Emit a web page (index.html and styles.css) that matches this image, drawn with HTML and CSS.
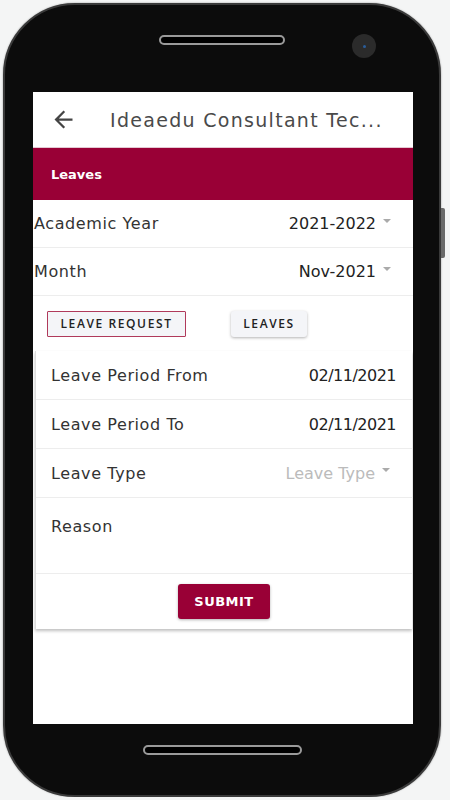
FILE: index.html
```html
<!DOCTYPE html>
<html lang="en">
<head>
    <meta charset="UTF-8">
    <meta name="viewport" content="width=device-width, initial-scale=1.0">
    <title>Leaves</title>
    <link rel="stylesheet" href="styles.css">
</head>
<body>
    <div class="phone">
        <div class="side-key"></div>
        <div class="bezel-top">
            <div class="speaker"></div>
            <div class="camera"><span></span></div>
        </div>
        <div class="screen">
            <div class="appbar">
                <svg class="back" width="27" height="27" viewBox="0 0 24 24">
                    <path d="M20 11H7.83l5.59-5.59L12 4l-8 8 8 8 1.41-1.41L7.83 13H20v-2z" fill="#444"/>
                </svg>
                <div class="title">Ideaedu Consultant Tec...</div>
            </div>
            <div class="section-bar">Leaves</div>

            <div class="row">
                <span class="label">Academic Year</span>
                <span class="select">2021-2022 <i class="caret"></i></span>
            </div>
            <div class="row">
                <span class="label">Month</span>
                <span class="select">Nov-2021 <i class="caret"></i></span>
            </div>
            <div class="tabs">
                <button class="tab active">LEAVE REQUEST</button>
                <button class="tab raised">LEAVES</button>
            </div>

            <div class="card">
                <div class="field">
                    <span class="label">Leave Period From</span>
                    <span class="value">02/11/2021</span>
                </div>
                <div class="field">
                    <span class="label">Leave Period To</span>
                    <span class="value">02/11/2021</span>
                </div>
                <div class="field">
                    <span class="label">Leave Type</span>
                    <span class="select muted">Leave Type <i class="caret"></i></span>
                </div>
                <div class="field reason">
                    <span class="label">Reason</span>
                </div>
                <div class="actions">
                    <button class="submit">SUBMIT</button>
                </div>
            </div>
        </div>
        <div class="bezel-bottom">
            <div class="speaker wide"></div>
        </div>
    </div>
</body>
</html>
```

FILE: styles.css
```css
body {
    margin: 0;
    background-color: #f4f5f5;
    font-family: "DejaVu Sans", "Open Sans", sans-serif;
}
.phone {
    position: relative;
    width: 434px;
    height: 790px;
    margin: 3px 0 0 3px;
    background-color: #0c0c0c;
    border: 2px solid #3a3a3a;
    border-radius: 72px;
    box-shadow: 0 0 2px rgba(0, 0, 0, 0.4);
    display: flex;
    flex-direction: column;
    align-items: center;
}
.side-key {
    position: absolute;
    right: -6px;
    top: 203px;
    width: 4px;
    height: 50px;
    background-color: #6a6a6a;
    border-radius: 0 2px 2px 0;
}
.bezel-top {
    position: relative;
    width: 100%;
    height: 87px;
    display: flex;
    justify-content: center;
    padding-top: 30px;
    box-sizing: border-box;
}
.speaker {
    width: 122px;
    height: 6px;
    border: 2px solid #9a9a9a;
    border-radius: 6px;
    background-color: #000;
}
.speaker.wide {
    width: 155px;
}
.camera {
    position: absolute;
    left: 347px;
    top: 29px;
    width: 24px;
    height: 24px;
    border-radius: 50%;
    background-color: #2b2b2b;
    display: flex;
    align-items: center;
    justify-content: center;
}
.camera span {
    width: 3px;
    height: 3px;
    border-radius: 50%;
    background-color: #2a5d9a;
}
.screen {
    width: 380px;
    height: 632px;
    margin-left: 2px;
    background-color: #fff;
    overflow: hidden;
}
.bezel-bottom {
    width: 100%;
    padding-top: 21px;
    display: flex;
    justify-content: center;
}
.appbar {
    height: 55px;
    display: flex;
    align-items: center;
    border-bottom: 1px solid #e3c9d2;
}
.back {
    margin-left: 17px;
    margin-right: 33px;
}
.title {
    font-size: 19px;
    color: #4a4a4a;
    letter-spacing: 1.3px;
    white-space: nowrap;
}
.section-bar {
    height: 52px;
    background-color: #990036;
    color: #fff;
    font-size: 13px;
    font-weight: 700;
    display: flex;
    align-items: center;
    padding-left: 18px;
}
.row {
    height: 47px;
    display: flex;
    align-items: center;
    justify-content: space-between;
    padding: 0 22px 0 1px;
    border-bottom: 1px solid #ededed;
    font-size: 16px;
    color: #333;
}
.label {
    color: #333;
    letter-spacing: 0.6px;
}
.select {
    display: flex;
    align-items: center;
    color: #222;
}
.select.muted {
    color: #bbb;
}
.caret {
    width: 0;
    height: 0;
    margin-left: 7px;
    margin-bottom: 6px;
    border-left: 4px solid transparent;
    border-right: 4px solid transparent;
    border-top: 4px solid #aaa;
}
.tabs {
    height: 55px;
    display: flex;
    align-items: center;
    gap: 45px;
    padding-left: 14px;
}
.tab {
    height: 26px;
    background-color: #f4f5f8;
    border: none;
    font-family: "Open Sans", sans-serif;
    font-size: 12px;
    font-weight: 600;
    letter-spacing: 1.6px;
    color: #222;
    padding: 0;
    border-radius: 3px;
}
.tab.active {
    width: 139px;
    border: 1px solid #b03a5b;
    border-radius: 1px;
}
.tab.raised {
    width: 76px;
    box-shadow: 0 1px 3px rgba(0, 0, 0, 0.3);
}
.card {
    margin: 0 1px 0 2px;
    border-left: 1px solid #ddd;
    box-shadow: 0 2px 3px rgba(0, 0, 0, 0.25);
}
.field {
    height: 48px;
    display: flex;
    align-items: center;
    justify-content: space-between;
    padding: 0 16px 0 15px;
    border-bottom: 1px solid #ededed;
    font-size: 16px;
}
.field .select {
    padding-right: 6px;
}
.value {
    color: #222;
    letter-spacing: -0.5px;
}
.field.reason {
    height: 76px;
    align-items: flex-start;
    padding-top: 19px;
    box-sizing: border-box;
}
.actions {
    height: 55px;
    display: flex;
    justify-content: center;
    align-items: center;
}
.submit {
    width: 92px;
    height: 35px;
    background-color: #990036;
    color: #fff;
    border: none;
    border-radius: 3px;
    font-family: inherit;
    font-size: 13px;
    font-weight: 700;
    letter-spacing: 0.5px;
    box-shadow: 0 1px 3px rgba(0, 0, 0, 0.3);
}
```
